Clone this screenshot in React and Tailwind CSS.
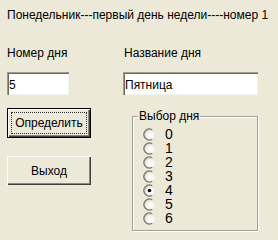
import React from "react";

const days = ["0", "1", "2", "3", "4", "5", "6"];

function Radio({ checked }) {
    return (
        <svg width="13" height="13" viewBox="0 0 13 13" className="shrink-0">
            <defs>
                <radialGradient id="rg" cx="0.6" cy="0.6" r="0.6">
                    <stop offset="0" stopColor="#ffffff" />
                    <stop offset="0.6" stopColor="#f4f3ee" />
                    <stop offset="1" stopColor="#d6d4c8" />
                </radialGradient>
            </defs>
            <circle cx="6.5" cy="6.5" r="5.5" fill="url(#rg)" />
            <path d="M9.25 1.74 A5.5 5.5 0 1 0 9.25 11.26" fill="none" stroke="#7d7b70" strokeWidth="1.3" />
            {checked && <circle cx="6.5" cy="6.5" r="1.8" fill="#000" />}
        </svg>
    );
}

export default function App() {
    const selected = "4";
    return (
        <div className="w-[278px] h-[240px] bg-[#ece9d8] pl-[7px] pt-[7px] text-[12px] leading-4 text-black font-['Liberation_Sans',Arial,sans-serif]">
            <p className="whitespace-nowrap">Понедельник---первый день недели----номер 1</p>

            <div className="mt-[22px] flex">
                <span className="w-[117px]">Номер дня</span>
                <span>Название дня</span>
            </div>

            <div className="mt-[11px] flex">
                <div className="w-[62px] h-[23px] bg-white pl-[2px] pt-[3px] flex items-center shadow-[inset_1px_1px_0_#9d9b8c,inset_2px_2px_0_#6f6d60,inset_-1px_-1px_0_#f4f3ee]">
                    5
                </div>
                <div className="ml-[54px] w-[135px] h-[23px] bg-white pl-[2px] pt-[3px] flex items-center shadow-[inset_1px_1px_0_#9d9b8c,inset_2px_2px_0_#6f6d60,inset_-1px_-1px_0_#f4f3ee]">
                    Пятница
                </div>
            </div>

            <div className="mt-[13px] flex">
                <div className="flex flex-col w-[84px]">
                    <button className="h-[30px] border border-black bg-[#ece9d8] p-[3px] shadow-[inset_1px_1px_0_#fff,inset_-1px_-1px_0_#404040,inset_-2px_-2px_0_#8a887c]">
                        <div className="h-full border border-dotted border-[#333] flex items-center justify-center">
                            Определить
                        </div>
                    </button>
                    <button className="mt-[18px] h-[29px] bg-[#ece9d8] flex items-center justify-center shadow-[inset_1px_1px_0_#fff,inset_-1px_-1px_0_#404040,inset_-2px_-2px_0_#8a887c]">
                        Выход
                    </button>
                </div>

                <fieldset className="ml-[41px] mt-[1px] w-[126px] h-[122px] border border-[#a3a192] shadow-[1px_1px_0_#fff,inset_1px_1px_0_#fff]">
                    <legend className="ml-[5px] px-[1px] bg-[#ece9d8] leading-[14px]">Выбор дня</legend>
                    <div className="flex flex-col pl-[10px] pt-[4px]">
                        {days.map((d) => (
                            <label key={d} className="h-[14px] flex items-center">
                                <Radio checked={d === selected} />
                                <span className="ml-[9px] text-[14px] leading-[14px]">{d}</span>
                            </label>
                        ))}
                    </div>
                </fieldset>
            </div>
        </div>
    );
}
